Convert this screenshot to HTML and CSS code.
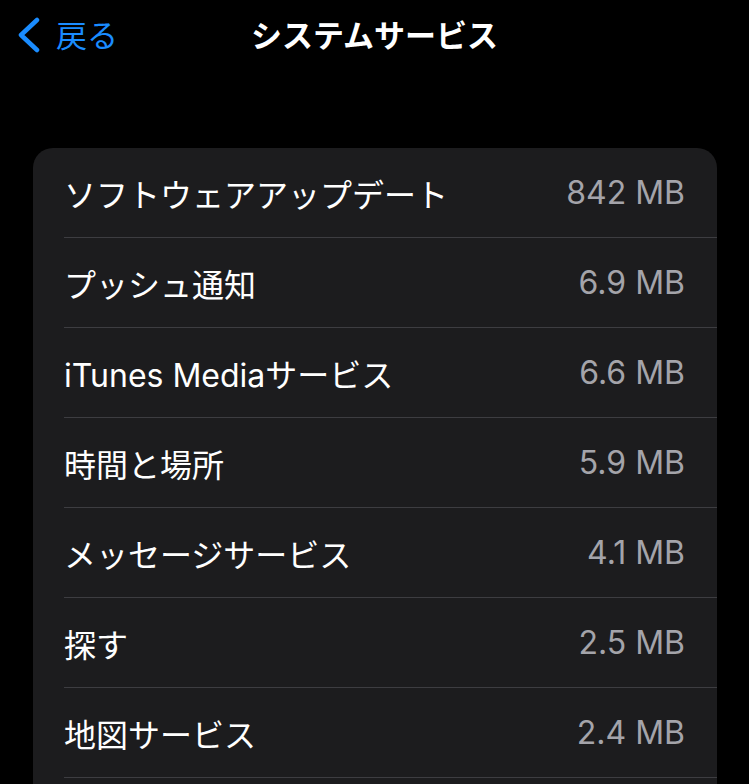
FILE: index.html
```html
<!DOCTYPE html>
<html lang="ja">
<head>
  <meta charset="UTF-8" />
  <meta name="viewport" content="width=device-width, initial-scale=1.0" />
  <title>システムサービス</title>
  <link rel="stylesheet" href="styles.css">
</head>
<body>
  <header class="nav">
    <a class="back" href="#">
      <svg class="chevron" width="26" height="36" viewBox="0 0 26 36">
        <path d="M22 3 L6 18 L22 33" fill="none" stroke="currentColor" stroke-width="4.5" stroke-linecap="round" stroke-linejoin="round" />
      </svg>
      <span>戻る</span>
    </a>
    <h1>システムサービス</h1>
  </header>

  <ul class="list">
    <li><span class="name">ソフトウェアアップデート</span><span class="size">842 MB</span></li>
    <li><span class="name">プッシュ通知</span><span class="size">6.9 MB</span></li>
    <li><span class="name">iTunes Mediaサービス</span><span class="size">6.6 MB</span></li>
    <li><span class="name">時間と場所</span><span class="size">5.9 MB</span></li>
    <li><span class="name">メッセージサービス</span><span class="size">4.1 MB</span></li>
    <li><span class="name">探す</span><span class="size">2.5 MB</span></li>
    <li><span class="name">地図サービス</span><span class="size">2.4 MB</span></li>
  </ul>
</body>
</html>
```

FILE: styles.css
```css
* {
  box-sizing: border-box;
}

html,
body {
  height: 100%;
  overflow: hidden;
}

body {
  margin: 0;
  background: #000;
  color: #fff;
  font-family: Inter, "Noto Sans CJK JP", sans-serif;
}

.nav {
  position: relative;
  height: 66px;
  display: flex;
  align-items: center;
  justify-content: center;
}

.nav h1 {
  margin: 0;
  font-size: 31px;
  font-weight: 700;
}

.back {
  position: absolute;
  left: 15px;
  top: 0;
  height: 70px;
  display: flex;
  align-items: center;
  gap: 15px;
  color: #1a8cff;
  text-decoration: none;
  font-size: 31px;
}

.back span {
  margin-top: -4px;
}

.chevron {
  display: block;
}

/* the list runs on past the bottom of the screen */
.list {
  list-style: none;
  margin: 82px 32px 0 33px;
  padding: 0 0 60px 31px;
  background: #1c1c1e;
  border-radius: 20px;
}

.list li {
  height: 90px;
  display: flex;
  align-items: center;
  justify-content: space-between;
  padding-right: 32px;
  border-bottom: 1px solid #3d3d41;
  font-size: 32px;
}

.name {
  color: #fff;
}

.size {
  color: #a4a4aa;
}
```
